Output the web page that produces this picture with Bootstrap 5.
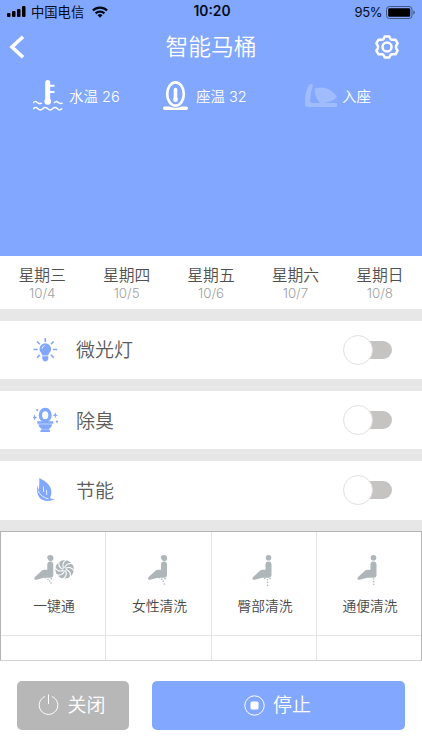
<!DOCTYPE html>
<html lang="zh-CN">
<head>
<meta charset="utf-8">
<meta name="viewport" content="width=device-width, initial-scale=1">
<title>智能马桶</title>
<link href="https://cdn.jsdelivr.net/npm/bootstrap@5.3.0/dist/css/bootstrap.min.css" rel="stylesheet">
<style>
:root{--sky:#82a7ff}
body{font-family:Inter,"Noto Sans CJK SC",sans-serif;font-weight:350;background:#fff;line-height:1;overflow:hidden}
svg{display:block;flex:none}
.hero{background:var(--sky);height:256px}
.status{height:24px;color:#050a18;font-size:13.3px;font-weight:400;display:grid;grid-template-columns:1fr auto 1fr;padding:0 7px}
.carrier{margin:0 8px 0 5px;padding-top:2px}
.clock{font-weight:600;font-size:13.8px;padding-left:2px}
.percent{font-size:13px;letter-spacing:-.4px}
.titlebar{height:46px;display:grid;grid-template-columns:1fr auto 1fr;padding:0 23px 0 9px}
.titlebar h1{font-size:22.8px;font-weight:350;padding-left:14px}
.sensors{display:grid;grid-template-columns:130px 142px 1fr;padding:9px 0 0 33px;font-size:14.5px}
.sensors>div{height:33px}
.sensors span{padding-top:3px}
.days{height:53px}
.day{font-size:15.8px;color:#505050;padding-top:12px}
.day small{font-size:13.3px;font-weight:300;color:#a0a0a0;margin-top:3px}
.day b{font-weight:350}
.gapbar{background:#e7e7e7;height:11.5px}
.option{height:58.7px;padding:0 30px 0 33px;font-size:19px;color:#5c5c5c}
.option>span:first-of-type{padding-top:2px}
.toggle{width:49px;height:30px;display:flex;align-items:center;justify-content:flex-end}
.toggle::before{content:"";width:30.5px;height:30.5px;border-radius:50%;background:#fff;border:1px solid #e2e0e0;flex:none;z-index:1}
.toggle::after{content:"";width:34px;height:18.5px;margin-left:-15px;background:#c6c3c3;border-radius:10px;flex:none}
.modes{height:130px;border:1px solid #b4b4b4;border-bottom-color:#d2d2d2;display:grid;grid-template-columns:105px 106px 105px 1fr;grid-template-rows:104px 1fr;font-size:13.8px;color:#484848}
.mode{border-right:1px solid #e4e4e4;border-bottom:1px solid #e4e4e4;padding:20px 0 0 2px}
.mode span{margin-top:8px}
.mode:nth-child(4n){border-right:0}
.mode:nth-child(n+5){border-bottom:0}
.actions{padding:19.5px 17px;gap:23px}
.actions .btn{height:49.5px;border-radius:5px;border:0;color:#fff;font-size:19px;font-weight:350;padding:0 2px 0 0;line-height:1}
.btn-off{width:112px;background:#b7b7b7!important}
.btn-stop{background:var(--sky)!important}
</style>
<script src="https://cdn.jsdelivr.net/npm/bootstrap@5.3.0/dist/js/bootstrap.bundle.min.js"></script>
</head>
<body>
<svg width="0" height="0" class="position-absolute" aria-hidden="true">
  <defs>
    <path id="sitter" d="M47.300 564.800q0-3.200 3-3.200t3 3.200V575q0 2.800-2.800 2.800H44L37.500 579.500q-3.500.8-3.300-1 0-.8 1-1.700L41.500 571q1.200-1.200 2.800-1.200h3z"/>
  </defs>
</svg>
<header class="hero text-white">
  <div class="status align-items-center">
    <div class="d-flex align-items-center">
      <svg width="19" height="11" viewBox="0 0 19 11"><rect y="7" width="3.500" height="4" rx="1"/><rect x="5" y="5" width="3.500" height="6" rx="1"/><rect x="10" y="3" width="3.500" height="8" rx="1"/><rect x="15" width="3.500" height="11" rx="1"/></svg>
      <span class="carrier">中国电信</span>
      <svg width="16" height="12" viewBox="0 0 16 12" fill="none" stroke="#050a18" stroke-width="2.300"><path d="M.9 4.500a10.200 10.200 0 0 1 14.200 0M3.600 7.400a6.300 6.300 0 0 1 8.800 0"/><path d="M8 11.700 5.500 9.200a3.600 3.600 0 0 1 5 0z" fill="#050a18" stroke="none"/></svg>
    </div>
    <span class="clock">10:20</span>
    <div class="d-flex align-items-center justify-content-end gap-1">
      <span class="percent">95%</span>
      <svg width="29" height="13" viewBox="0 0 29 13"><rect x=".5" y=".5" width="25.500" height="12" rx="3" fill="none" stroke="#415684"/><rect x="2.200" y="2.200" width="22" height="8.600" rx="1.200"/><path d="M27.300 4.500q1.500.6 1.500 2t-1.500 2z" fill="#415684"/></svg>
    </div>
  </div>
  <div class="titlebar align-items-center">
    <svg width="16" height="24" viewBox="0 0 16 24" fill="none" stroke="#fff" stroke-width="3.600"><path d="M14 1.700 3 12l11 10.300"/></svg>
    <h1 class="m-0">智能马桶</h1>
    <svg class="ms-auto" width="24" height="24" viewBox="-12 -12 24 24" fill="none" stroke="#fff" stroke-width="2.500" stroke-linejoin="round"><path d="M-2.300-10.500H2.300L3.600-7.800Q4.400-7 5.600-7.300L8.500-7.300 10.600-3.700 9.200-1.300Q8.800 0 9.200 1.300L10.600 3.700 8.500 7.300 5.600 7.300Q4.400 7 3.600 7.800L2.300 10.500H-2.300L-3.600 7.800Q-4.400 7-5.600 7.300L-8.500 7.300-10.600 3.700-9.200 1.300Q-8.800 0-9.200-1.300L-10.600-3.700-8.500-7.300-5.600-7.300Q-4.400-7-3.600-7.800z"/><circle r="4.500"/></svg>
  </div>
  <div class="sensors">
    <div class="d-flex align-items-center">
      <svg class="me-1" width="32" height="33" viewBox="33 79 32 33" fill="none" stroke="#fff"><path d="M47.700 82.500V101" stroke-width="5" stroke-linecap="round"/><circle cx="47.700" cy="101.500" r="3.300" fill="#fff" stroke="none"/><path d="M49 85.700h5.500M49 92h5.500" stroke-width="2"/><path d="M33 103q2-2.500 4.300-.5t4.500.5M54 103q2-2.500 4.300-.5t4.300.2M33 109q2.400-2.800 4.900-.3t4.900 0 4.900 0 4.900 0 4.900 0 4.700-.3" stroke-width="1.500"/></svg>
      <span>水温 26</span>
    </div>
    <div class="d-flex align-items-center">
      <svg class="me-2" width="25" height="33" viewBox="163 79 25 33" fill="none" stroke="#fff"><ellipse cx="175.500" cy="94" rx="8.300" ry="11.600" stroke-width="2.700"/><path d="M175.500 89.500V99" stroke-width="3.600" stroke-linecap="round"/><circle cx="175.500" cy="99.700" r="2.400" fill="#fff" stroke="none"/><path d="M164.500 106.500h5q6 2.500 12 0h5q1.500 0 1.500 1.700t-1.500 1.700h-22q-1.500 0-1.500-1.700t1.500-1.700z" fill="#fff" stroke="none"/></svg>
      <span>座温 32</span>
    </div>
    <div class="d-flex align-items-center">
      <svg width="37" height="33" viewBox="305 79 37 33" fill="#fff" opacity=".24"><path d="M309.500 84.200q3.500-.5 3.500 1-2.600 7-2.800 14.800 0 3 3 3H337v4h-28.500q-4 0-3.800-4 .2-12 4.800-18.800z"/><path d="M314.800 88.500q13-4 22 8-2.500 4.500-10 5.800l-2 1h-4.200l-2.200-2.200q-4.200-5.200-3.600-12.600z"/></svg>
      <span>入座</span>
    </div>
  </div>
</header>
<section class="days d-flex text-center">
  <div class="day flex-fill w-100"><b>星期三</b><small class="d-block">10/4</small></div>
  <div class="day flex-fill w-100"><b>星期四</b><small class="d-block">10/5</small></div>
  <div class="day flex-fill w-100"><b>星期五</b><small class="d-block">10/6</small></div>
  <div class="day flex-fill w-100"><b>星期六</b><small class="d-block">10/7</small></div>
  <div class="day flex-fill w-100"><b>星期日</b><small class="d-block">10/8</small></div>
</section>
<main>
  <div class="gapbar"></div>
  <div class="option d-flex align-items-center">
    <svg width="43" height="26" viewBox="33 337 43 26" fill="#82a7ff"><path d="M45.300 343.200a5.800 5.800 0 0 1 5.800 5.800c0 3-2.500 3.800-2.800 6.400h-6c-.3-2.600-2.800-3.400-2.800-6.400a5.800 5.800 0 0 1 5.800-5.800zM42.300 356.300h6v2.700q-1 2.500-3 2.500t-3-2.500z"/><path d="M45.300 338v4M33.500 349.500h4.200M53 349.500h4.200M37 341.500l2.800 2.800M53.700 341.500l-2.800 2.800M37 357.700l2.800-2.800M53.700 357.700l-2.800-2.800" stroke="#82a7ff" stroke-width="1.600"/><path d="M42 348.700q.3-2.500 2.600-3" stroke="#fff" stroke-width=".8" fill="none"/></svg>
    <span>微光灯</span><span class="toggle ms-auto" role="switch" aria-checked="false"></span>
  </div>
  <div class="gapbar"></div>
  <div class="option d-flex align-items-center">
    <svg width="43" height="26" viewBox="33 407 43 26" fill="#82a7ff"><ellipse cx="45.200" cy="415.200" rx="4.800" ry="5.700" fill="none" stroke="#82a7ff" stroke-width="3.400"/><path d="M37.300 421.300h16v2.400h-16zM38.300 424.300h14q-.6 3.500-3.700 4.900H42q-3.100-1.400-3.700-4.900zM41 429.600h8.500l.8 2.400H40.200zM34.600 414.500l.8 2.200 2 .8-2 .8-.8 2.200-.8-2.200-2-.8 2-.8zM55.300 412.300l.8 2.100 2 .8-2 .8-.8 2.100-.8-2.100-2-.8 2-.8z"/><circle cx="37.200" cy="410" r="1.100"/><circle cx="57" cy="421.700" r="1.100"/></svg>
    <span>除臭</span><span class="toggle ms-auto" role="switch" aria-checked="false"></span>
  </div>
  <div class="gapbar"></div>
  <div class="option d-flex align-items-center">
    <svg width="43" height="26" viewBox="33 477 43 26" fill="#82a7ff"><path d="M39.300 478q10.500 5 11.900 12 .8 4.700-1.200 8.300 2 .9 5 .7-5 2.500-10 1.800-7-1.500-7.900-9.500-.1-3.300.7-6.700 0 3.500 1 6l.5-6.500z"/><path d="M38.200 491q3 6.500 10.300 7.800M43.400 486.500l.3 5.500M46.500 490l.2 5" fill="none" stroke="#fff" stroke-width=".8"/></svg>
    <span>节能</span><span class="toggle ms-auto" role="switch" aria-checked="false"></span>
  </div>
  <div class="gapbar"></div>
  <section class="modes text-center">
    <div class="mode d-flex flex-column align-items-center">
      <svg width="42" height="40" viewBox="33 552 42 40" fill="#aeb6ba"><use href="#sitter"/><path d="M47 557q.8-2 3.300-2 3 .2 3.200 3 0 3-3 3.200-2.300-.1-2.800-2.400z"/><circle cx="45.500" cy="577.800" r=".8"/><circle cx="48" cy="579.300" r=".8"/><circle cx="51.300" cy="578.800" r=".8"/><circle cx="49.600" cy="581" r=".8"/><circle cx="51" cy="583" r=".8"/>
      <circle cx="64.600" cy="569.300" r="9.300"/>
      <g transform="translate(64.600 569.300)" fill="none" stroke="#fff" stroke-width="1.100"><path id="vane" d="M0-1.300Q2-7 8.500-5.500"/><use href="#vane" transform="rotate(45)"/><use href="#vane" transform="rotate(90)"/><use href="#vane" transform="rotate(135)"/><use href="#vane" transform="rotate(180)"/><use href="#vane" transform="rotate(225)"/><use href="#vane" transform="rotate(270)"/><use href="#vane" transform="rotate(315)"/></g></svg>
      <span>一键通</span>
    </div>
    <div class="mode d-flex flex-column align-items-center">
      <svg width="42" height="40" viewBox="25.300 552 42 40" fill="#aeb6ba"><use href="#sitter"/><path d="M47 557q.8-2 3.300-2 3 .2 3.200 3 0 3-3 3.200-2.300-.1-2.800-2.400z"/><circle cx="45.500" cy="577.800" r=".8"/><circle cx="48" cy="579.300" r=".8"/><circle cx="51.300" cy="578.800" r=".8"/><circle cx="49.600" cy="581.200" r=".8"/><circle cx="50.700" cy="584" r=".8"/></svg>
      <span>女性清洗</span>
    </div>
    <div class="mode d-flex flex-column align-items-center">
      <svg width="42" height="40" viewBox="25.800 552 42 40" fill="#aeb6ba"><use href="#sitter"/><circle cx="50.300" cy="557.800" r="2.800"/><circle cx="46.500" cy="578.500" r=".8"/><circle cx="49.400" cy="579.700" r=".8"/><circle cx="52" cy="578.500" r=".8"/><circle cx="49.400" cy="582.500" r=".8"/><circle cx="49.400" cy="585.300" r=".8"/></svg>
      <span>臀部清洗</span>
    </div>
    <div class="mode d-flex flex-column align-items-center">
      <svg width="42" height="40" viewBox="25.800 552 42 40" fill="#aeb6ba"><use href="#sitter"/><circle cx="50.300" cy="557.800" r="2.800"/><circle cx="50.500" cy="579" r=".8"/><circle cx="50.500" cy="581.600" r=".8"/><circle cx="50.500" cy="584.200" r=".8"/></svg>
      <span>通便清洗</span>
    </div>
    <div class="mode"></div><div class="mode"></div><div class="mode"></div><div class="mode"></div>
  </section>
</main>
<footer class="actions d-flex">
  <button class="btn btn-off d-flex align-items-center justify-content-center gap-2"><svg width="21" height="22" viewBox="0 0 21 22" fill="none" stroke="#fff" stroke-width="1"><path d="M10.500.5v9.500M7 2.500a9.300 9.300 0 1 0 7 0"/></svg>关闭</button>
  <button class="btn btn-stop flex-fill d-flex align-items-center justify-content-center gap-2"><svg width="21" height="21" viewBox="0 0 21 21" fill="none" stroke="#fff"><circle cx="10.500" cy="10.500" r="9.700"/><rect x="6.500" y="6.500" width="8" height="8" rx="1.500" fill="#fff" stroke="none"/></svg>停止</button>
</footer>
</body>
</html>
